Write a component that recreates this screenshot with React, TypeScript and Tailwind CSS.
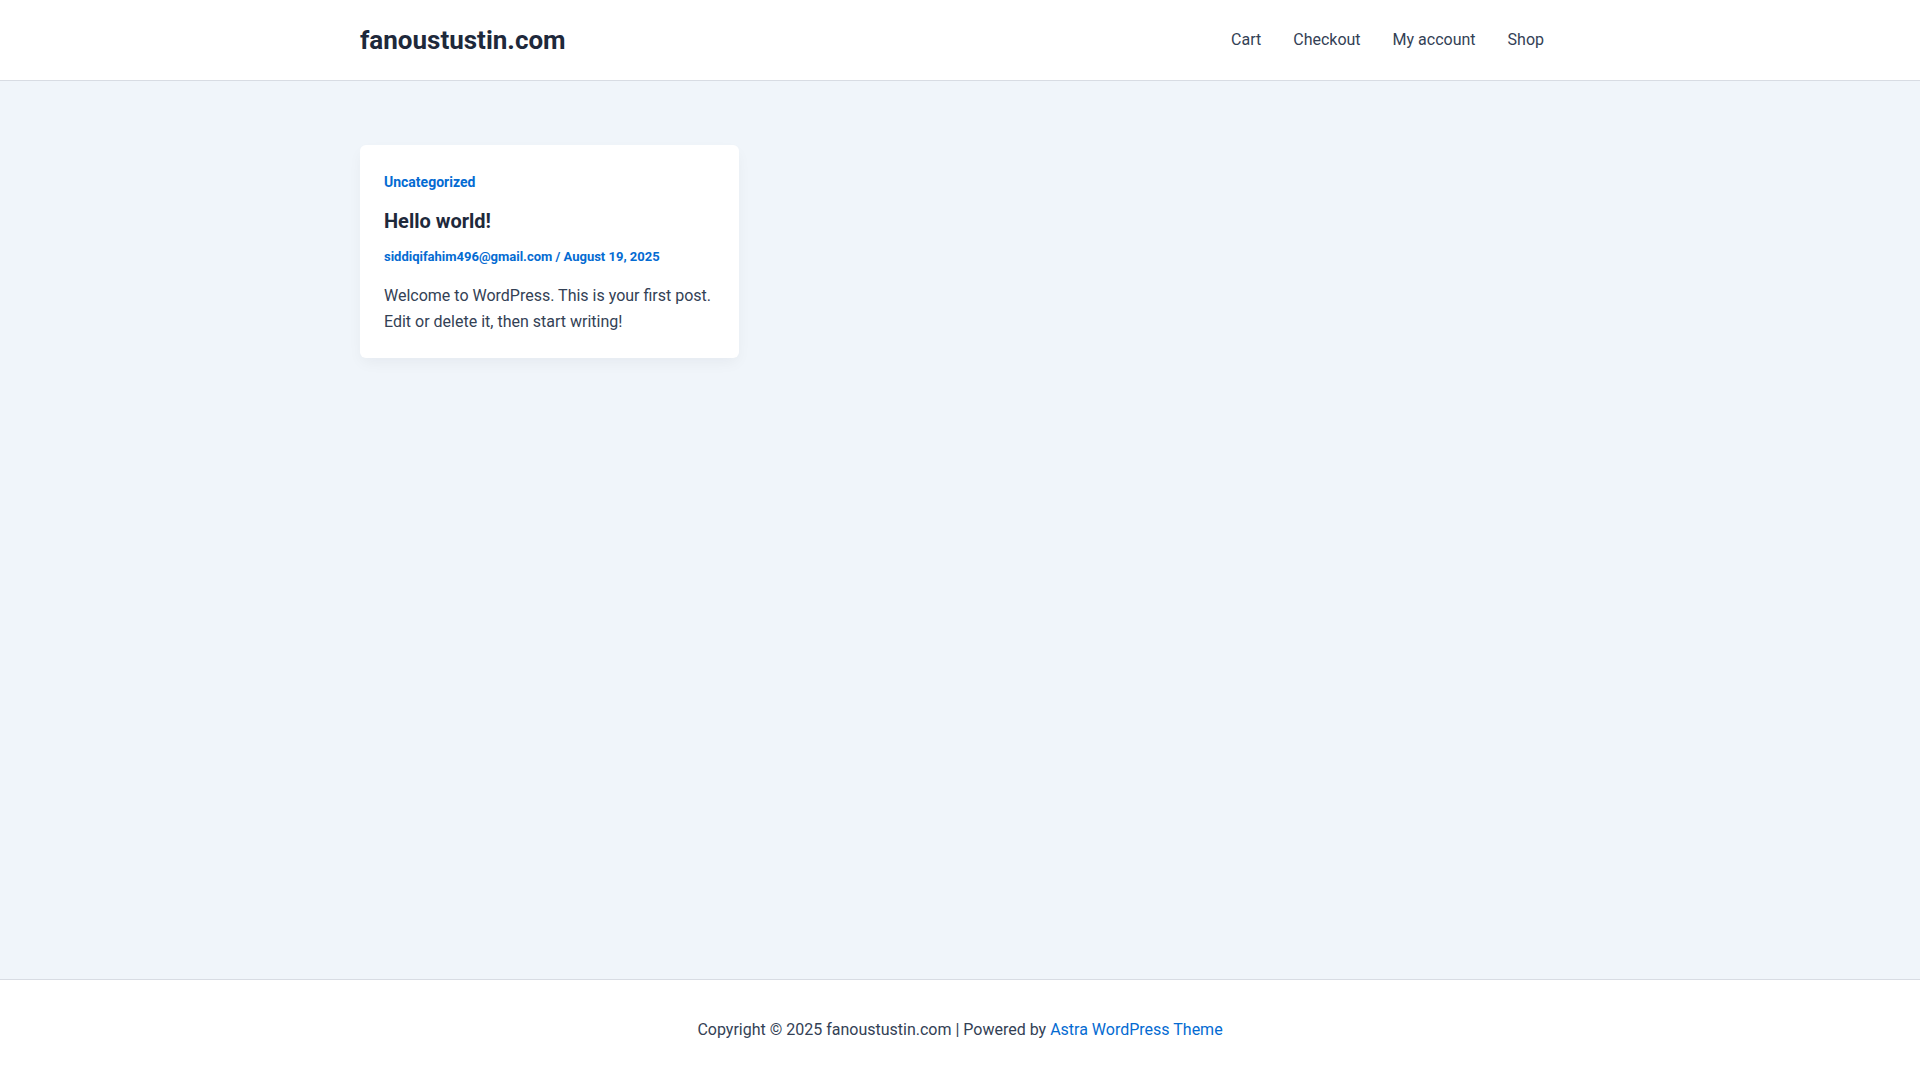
import React from "react";

export default function App() {
  const font = { fontFamily: "Roboto, 'Liberation Sans', sans-serif" };
  return (
    <div className="min-h-screen flex flex-col bg-[#f0f5fa] text-[#334155]" style={font}>
      <header className="bg-white border-b border-[#d8dce3] h-[81px]">
        <div className="w-[1200px] mx-auto h-[80px] flex items-center justify-between">
          <a className="text-[26px] font-bold text-[#1e293b] leading-none">fanoustustin.com</a>
          <nav className="flex items-center text-[16px] text-[#334155]">
            <a className="px-4">Cart</a>
            <a className="px-4">Checkout</a>
            <a className="px-4">My account</a>
            <a className="px-4">Shop</a>
          </nav>
        </div>
      </header>
      <main className="flex-1">
        <div className="w-[1200px] mx-auto pt-[64px]">
          <article className="w-[379px] bg-white rounded-[6px] px-[24px] pt-[25px] pb-[23px] shadow-[0_6px_15px_-2px_rgba(16,24,40,0.05)]">
            <div className="text-[14px] font-bold leading-[24px] text-[#046bd2]">Uncategorized</div>
            <h2 className="mt-[14px] text-[20px] font-bold leading-[26px] text-[#1e293b]">Hello world!</h2>
            <div className="mt-[13px] text-[13px] font-bold leading-[20px] text-[#046bd2]">
              siddiqifahim496@gmail.com / August 19, 2025
            </div>
            <p className="mt-[16px] text-[16px] leading-[26px] text-[#334155]">
              Welcome to WordPress. This is your first post. Edit or delete it, then start writing!
            </p>
          </article>
        </div>
      </main>
      <footer className="bg-white border-t border-[#d8dce3] h-[101px] flex items-center justify-center">
        <p className="text-[16px] leading-[26px] text-[#334155]">
          Copyright © 2025 fanoustustin.com | Powered by <a className="text-[#046bd2]">Astra WordPress Theme</a>
        </p>
      </footer>
    </div>
  );
}
